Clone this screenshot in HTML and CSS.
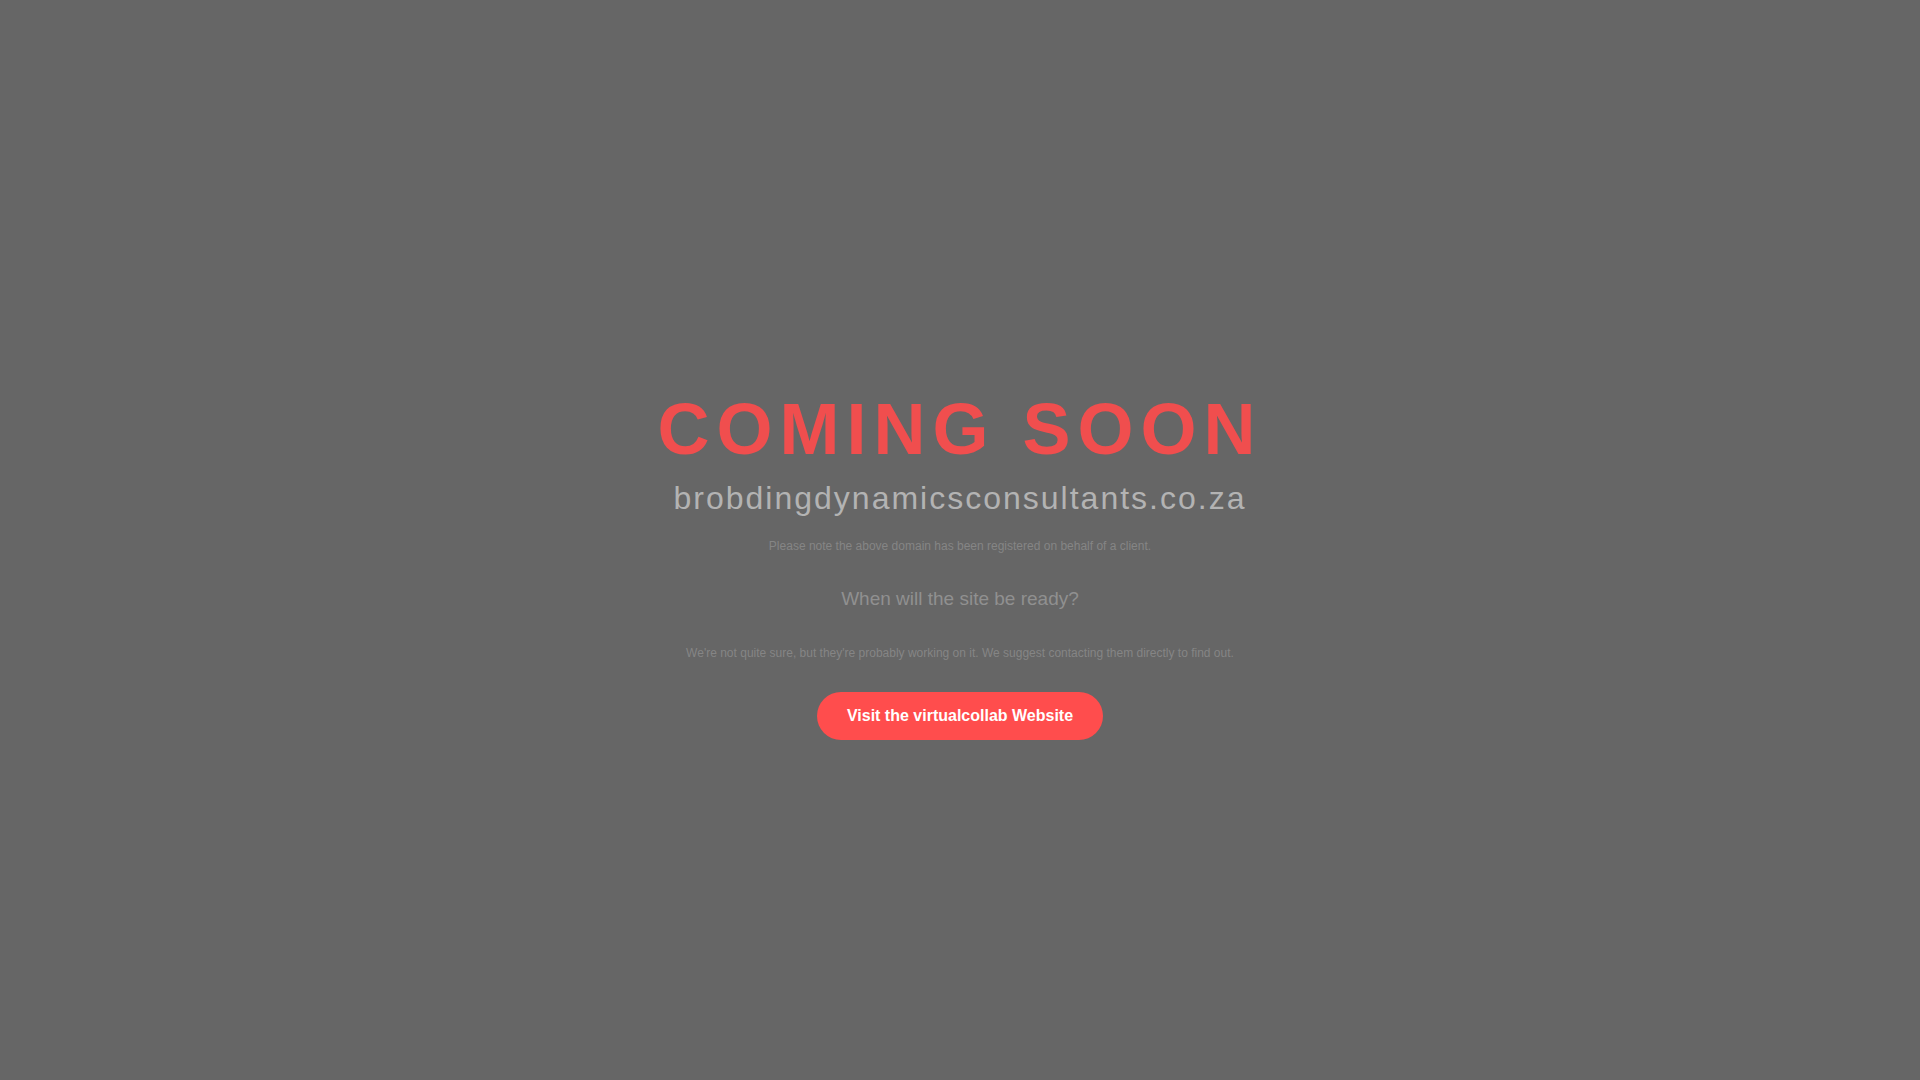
FILE: index.html
```html
<!DOCTYPE html>
<html lang="en">
<head>
    <meta charset="UTF-8">
    <meta name="viewport" content="width=device-width, initial-scale=1.0">
    <title>Coming Soon</title>
    <link rel="stylesheet" href="styles.css">
</head>
<body>
    <main class="container">
        <h1>COMING SOON</h1>
        <p class="domain">brobdingdynamicsconsultants.co.za</p>
        <p class="note">Please note the above domain has been registered on behalf of a client.</p>
        <h2>When will the site be ready?</h2>
        <p class="note">We're not quite sure, but they're probably working on it. We suggest contacting them directly to find out.</p>
        <a class="button" href="#">Visit the virtualcollab Website</a>
    </main>
</body>
</html>
```
FILE: styles.css
```css
body {
    display: flex;
    justify-content: center;
    align-items: center;
    min-height: 100vh;
    margin: 0;
    background-color: #666;
    font-family: "Liberation Sans", Arial, sans-serif;
}

.container {
    display: flex;
    flex-direction: column;
    align-items: center;
    padding: 67px 20px 20px;
    text-align: center;
}

h1 {
    margin: 0;
    color: #f04e4e;
    font-size: 72px;
    line-height: 84px;
    letter-spacing: 7px;
}

.domain {
    margin: 9px 0 21px;
    color: #b3b3b3;
    font-size: 32px;
    line-height: 36px;
    letter-spacing: 2px;
}

.note {
    margin: 0;
    color: #858585;
    font-size: 12px;
    line-height: 18px;
}

h2 {
    margin: 32px 0 33px;
    color: #909090;
    font-size: 19px;
    font-weight: normal;
    line-height: 24px;
}

.button {
    margin-top: 30px;
    padding: 15px 30px;
    border-radius: 50px;
    background-color: #ff4d4d;
    color: #fff;
    font-size: 16px;
    font-weight: bold;
    line-height: 18px;
    text-decoration: none;
}

.button:hover {
    background-color: #e64444;
}
```
